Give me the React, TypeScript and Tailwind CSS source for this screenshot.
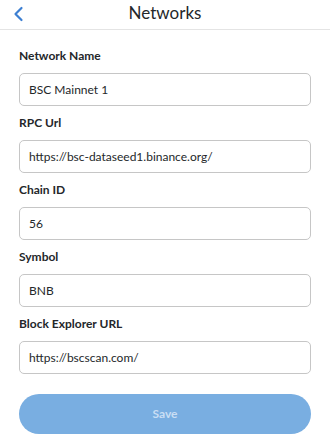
import React from "react";

const fields = [
  { label: "Network Name", value: "BSC Mainnet 1" },
  { label: "RPC Url", value: "https://bsc-dataseed1.binance.org/" },
  { label: "Chain ID", value: "56" },
  { label: "Symbol", value: "BNB" },
  { label: "Block Explorer URL", value: "https://bscscan.com/" },
];

const App = () => {
  return (
    <div className="w-[330px] h-[438px] bg-white font-['Lato',_sans-serif] text-[#24272a]">
      <div className="relative h-[30px] border-b border-[#e4e4e4] flex items-center justify-center">
        <button className="absolute left-[12px] top-[5px] text-[#3c7fd2]">
          <svg width="14" height="18" viewBox="0 0 14 18" fill="none">
            <path
              d="M9.5 3 L3.5 9 L9.5 15"
              stroke="currentColor"
              strokeWidth="2.2"
              strokeLinecap="round"
              strokeLinejoin="round"
            />
          </svg>
        </button>
        <h1 className="text-[17px] leading-none -mt-[5px]">Networks</h1>
      </div>

      <div className="px-[19px] pt-[18px]">
        {fields.map((f) => (
          <div key={f.label} className="mb-[3px]">
            <label className="block text-[12px] font-bold leading-[15px] h-[25px] pt-[0px]">
              {f.label}
            </label>
            <div className="h-[33px] rounded-[5px] border-[1.5px] border-[#c6c6c6] flex items-center px-[9px] text-[12px]">
              {f.value}
            </div>
            <div className="h-[6px]" />
          </div>
        ))}

        <button className="mt-[11px] w-[292px] h-[40px] rounded-full bg-[#79aee1] text-[#c9def4] text-[12px] font-bold">
          Save
        </button>
      </div>
    </div>
  );
};

export default App;
